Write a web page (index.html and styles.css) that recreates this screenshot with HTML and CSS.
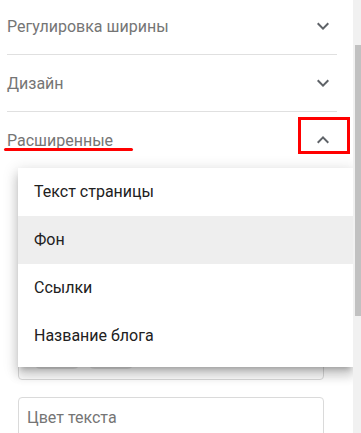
FILE: index.html
```html
<!DOCTYPE html>
<html lang="ru">
<head>
  <meta charset="UTF-8" />
  <title>Настройки шаблона</title>
  <link rel="stylesheet" href="styles.css">
</head>
<body>
  <div class="page">
    <div class="main">
      <div class="rows">
        <div class="row">
          <span class="row-title">Регулировка ширины</span>
          <svg class="chevron" viewBox="0 0 24 24"><path d="M16.59 8.59L12 13.17 7.41 8.59 6 10l6 6 6-6z"/></svg>
        </div>
        <div class="row">
          <span class="row-title">Дизайн</span>
          <svg class="chevron" viewBox="0 0 24 24"><path d="M16.59 8.59L12 13.17 7.41 8.59 6 10l6 6 6-6z"/></svg>
        </div>
        <div class="row row-open">
          <span class="row-title">Расширенные</span>
          <svg class="chevron" viewBox="0 0 24 24"><path d="M12 8l-6 6 1.41 1.41L12 10.83l4.59 4.58L18 14z"/></svg>
        </div>
      </div>

      <div class="fields">
        <div class="field field-select">
          <span class="chip"></span>
          <span class="chip"></span>
        </div>
        <div class="field field-text">
          <span class="field-label">Цвет текста</span>
        </div>
      </div>

      <!-- выпадающее меню -->
      <ul class="menu">
        <li class="menu-item">Текст страницы</li>
        <li class="menu-item active">Фон</li>
        <li class="menu-item">Ссылки</li>
        <li class="menu-item">Название блога</li>
      </ul>

      <!-- пометки на скриншоте -->
      <div class="mark-line"></div>
      <div class="mark-box"></div>
    </div>

    <div class="scrollbar">
      <div class="thumb"></div>
    </div>
  </div>
</body>
</html>
```

FILE: styles.css
```css
body {
  margin: 0;
  font-family: Roboto, "Noto Sans", Arial, sans-serif;
  background-color: #fff;
}

.page {
  display: flex;
  height: 433px;
  overflow: hidden;
}

.main {
  flex: 1;
  position: relative;
  overflow: hidden;
}

.rows {
  width: 330px;
  margin: -2px 0 0 7px;
}

.row {
  height: 56px;
  display: flex;
  align-items: center;
  justify-content: space-between;
  border-bottom: 1px solid #e0e0e0;
}

.row-open {
  border-bottom: none;
}

.row-title {
  font-size: 16px;
  color: #757575;
}

.chevron {
  width: 24px;
  height: 24px;
  margin-right: 2px;
  fill: #5f6368;
}

.fields {
  width: 306px;
  margin: 156px 0 0 18px;
  display: flex;
  flex-direction: column;
  gap: 17px;
}

.field {
  height: 56px;
  box-sizing: border-box;
  border: 1px solid #dadada;
  border-radius: 4px;
  padding: 0 8px;
  display: flex;
}

.field-select {
  align-items: flex-end;
  gap: 6px;
  padding: 0 14px 10px;
}

.chip {
  width: 48px;
  height: 16px;
  border-radius: 8px;
  background-color: #e8e8e8;
}

.field-text {
  align-items: flex-start;
  padding-top: 10px;
}

.field-label {
  font-size: 16px;
  color: #757575;
}

.menu {
  position: absolute;
  left: 18px;
  right: 0;
  top: 168px;
  margin: 0;
  padding: 0 0 7px;
  list-style: none;
  background-color: #fff;
  box-shadow: 0 5px 5px -3px rgba(0,0,0,0.2), 0 8px 10px 1px rgba(0,0,0,0.14), 0 3px 14px 2px rgba(0,0,0,0.12);
}

.menu-item {
  height: 48px;
  line-height: 48px;
  padding-left: 16px;
  font-size: 16px;
  color: #212121;
}

.menu-item.active {
  background-color: #eeeeee;
}

.mark-line {
  position: absolute;
  left: 4px;
  top: 148px;
  width: 129px;
  height: 3px;
  border-radius: 2px;
  background-color: #f00;
}

.mark-box {
  position: absolute;
  left: 298px;
  top: 117px;
  width: 52px;
  height: 37px;
  box-sizing: border-box;
  border: 3px solid #f00;
}

.scrollbar {
  width: 8px;
  background-color: #f1f1f1;
  padding-left: 2px;
  box-sizing: border-box;
}

.thumb {
  margin-top: 45px;
  height: 271px;
  background-color: #c1c1c1;
}
```
